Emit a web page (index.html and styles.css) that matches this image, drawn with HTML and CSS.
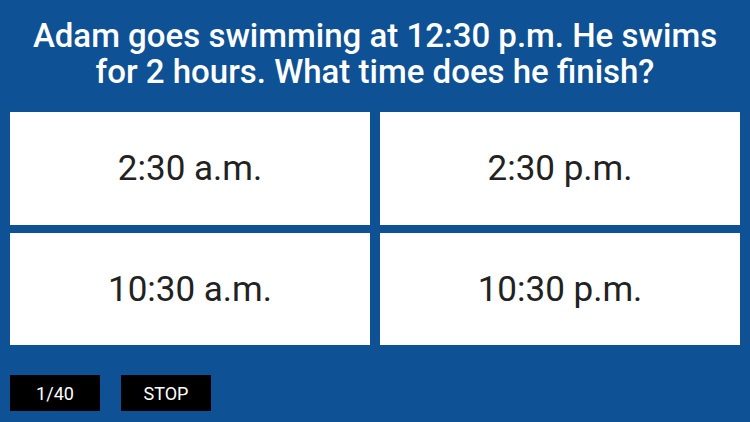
FILE: index.html
```html
<!DOCTYPE html>
<html>
<head>
<meta charset="utf-8">
<link rel="stylesheet" href="styles.css">
</head>
<body>
<div class="screen">
  <h1 class="question">Adam goes swimming at 12:30 p.m. He swims<br>for 2 hours. What time does he finish?</h1>
  <div class="answers">
    <div class="answer">2:30 a.m.</div>
    <div class="answer">2:30 p.m.</div>
    <div class="answer">10:30 a.m.</div>
    <div class="answer">10:30 p.m.</div>
  </div>
  <div class="controls">
    <div class="btn">1/40</div>
    <div class="btn">STOP</div>
  </div>
</div>
</body>
</html>
```
FILE: styles.css
```css
html, body {
  margin: 0;
  padding: 0;
  background: #0e5194;
}
.screen {
  width: 750px;
  height: 422px;
  display: flex;
  flex-direction: column;
  font-family: Roboto, "Liberation Sans", sans-serif;
}
.question {
  margin: 0;
  padding-top: 18px;
  height: 112px;
  box-sizing: border-box;
  color: #fff;
  font-size: 33px;
  font-weight: 500;
  line-height: 36px;
  text-align: center;
}
.answers {
  display: grid;
  grid-template-columns: 360px 360px;
  grid-template-rows: 113px 112px;
  column-gap: 10px;
  row-gap: 8px;
  padding: 0 10px;
}
.answer {
  background: #fff;
  display: flex;
  align-items: center;
  justify-content: center;
  color: #222;
  font-size: 35px;
  font-weight: 400;
}
.controls {
  display: flex;
  gap: 21px;
  padding: 30px 10px 0;
}
.btn {
  width: 90px;
  height: 36px;
  background: #000;
  color: #fff;
  font-size: 18px;
  display: flex;
  align-items: center;
  justify-content: center;
}
```
